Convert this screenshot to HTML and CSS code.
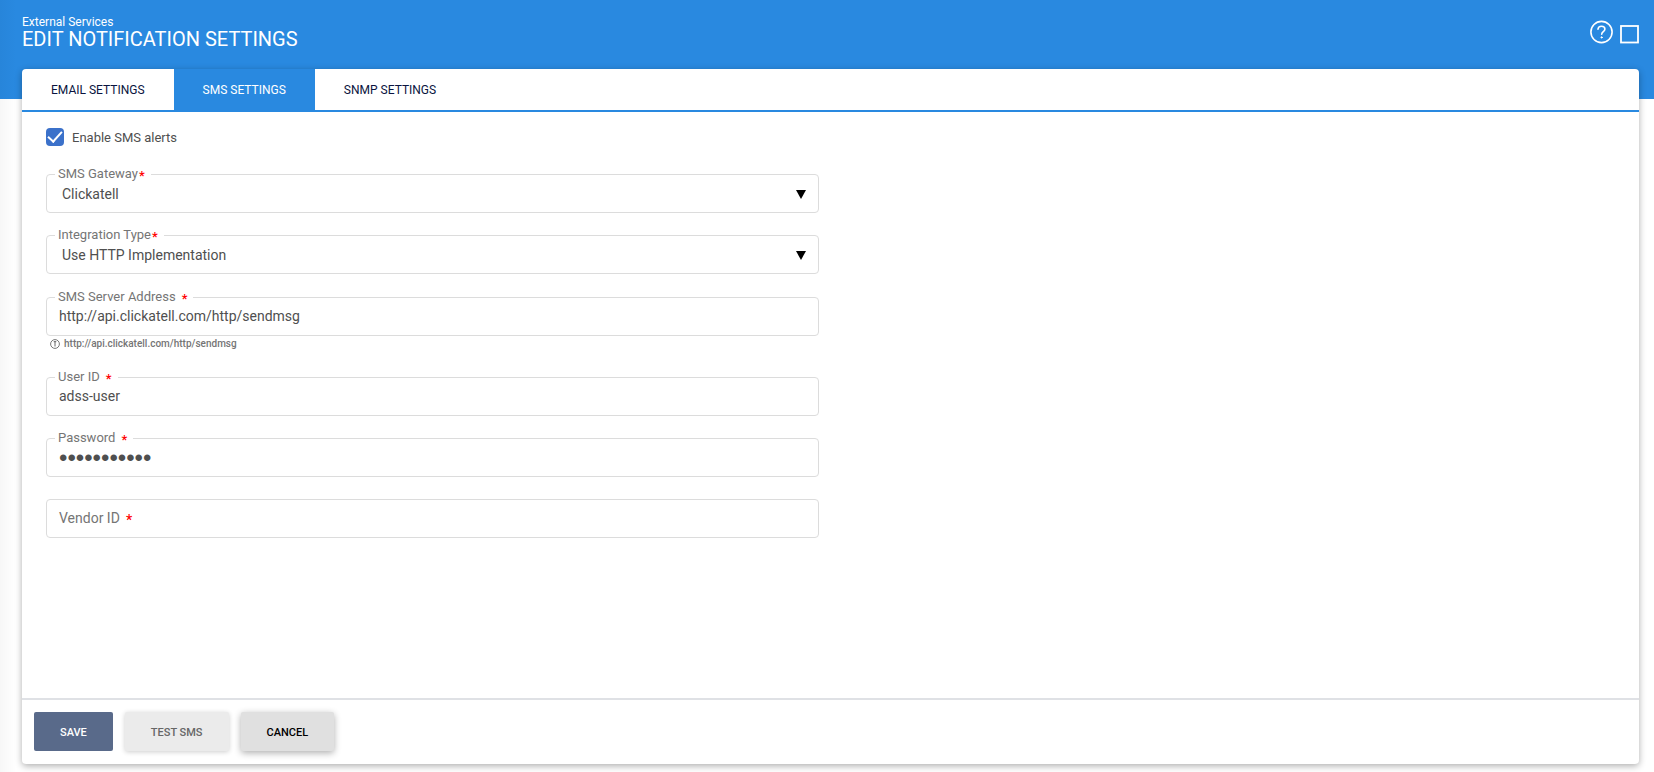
FILE: index.html
```html
<!DOCTYPE html>
<html lang="en">
<head>
<meta charset="utf-8">
<title>Edit Notification Settings</title>
<link rel="stylesheet" href="styles.css">
</head>
<body>
<header class="page-header">
  <div class="page-title">
    <div class="breadcrumb">External Services</div>
    <h1 class="title">EDIT NOTIFICATION SETTINGS</h1>
  </div>
  <div class="header-actions">
    <button class="icon-button" type="button" aria-label="Help">
      <svg width="24" height="24" viewBox="0 0 24 24" fill="none" stroke="#fff" stroke-width="1.6" stroke-linecap="round"><circle cx="11.5" cy="12" r="10.6"/><path d="M8 9.3C8.1 7.2 9.6 6.2 11.5 6.2s3.4 1.1 3.4 2.9c0 2.6-3.2 2.6-3.2 5.2"/><circle cx="11.6" cy="17.4" r=".7" fill="#fff" stroke-width=".8"/></svg>
    </button>
    <button class="icon-button box-button" type="button" aria-label="Expand">
      <svg width="19" height="19" viewBox="0 0 19 19" fill="none" stroke="#fff" stroke-width="1.8"><rect x="1" y="1" width="17" height="16.5"/></svg>
    </button>
  </div>
</header>
<main class="card">
  <nav class="tabs">
    <a class="tab" href="#email">EMAIL SETTINGS</a>
    <a class="tab tab-active" href="#sms" aria-current="page">SMS SETTINGS</a>
    <a class="tab" href="#snmp">SNMP SETTINGS</a>
  </nav>
  <form class="form">
    <div class="fields">
      <label class="check"><input class="check-box" type="checkbox" checked><span class="check-text">Enable SMS alerts</span></label>
      <div class="field">
        <label class="label" for="gateway">SMS Gateway<span class="star star-near">*</span></label>
        <select class="control select" id="gateway"><option>Clickatell</option></select>
        <svg class="arrow" width="10" height="9" viewBox="0 0 10 9"><path d="M0 0h10L5 9z"/></svg>
      </div>
      <div class="field">
        <label class="label" for="type">Integration Type<span class="star star-near">*</span></label>
        <select class="control select" id="type"><option>Use HTTP Implementation</option></select>
        <svg class="arrow" width="10" height="9" viewBox="0 0 10 9"><path d="M0 0h10L5 9z"/></svg>
      </div>
      <div class="field field-hinted">
        <label class="label" for="address">SMS Server Address<span class="star">*</span></label>
        <input class="control text" id="address" type="text" value="http://api.clickatell.com/http/sendmsg">
        <div class="hint">
          <svg width="10" height="10" viewBox="0 0 10 10" fill="none" stroke="#666"><circle cx="5" cy="5" r="4.4" stroke-width=".9"/><path d="M5 2.2v5.3M3.7 2.7h2.6" stroke-width="1"/></svg>
          <span>http://api.clickatell.com/http/sendmsg</span>
        </div>
      </div>
      <div class="field">
        <label class="label" for="user">User ID<span class="star">*</span></label>
        <input class="control text" id="user" type="text" value="adss-user">
      </div>
      <div class="field">
        <label class="label" for="password">Password<span class="star">*</span></label>
        <input class="control password" id="password" type="password" value="secretvalue">
      </div>
      <div class="field">
        <label class="label label-inside" for="vendor">Vendor ID<span class="star">*</span></label>
        <input class="control text" id="vendor" type="text">
      </div>
    </div>
    <footer class="actions">
      <button class="button button-save" type="button">SAVE</button>
      <button class="button button-test" type="button" disabled>TEST SMS</button>
      <button class="button button-cancel" type="button">CANCEL</button>
    </footer>
  </form>
</main>
</body>
</html>
```
FILE: styles.css
```css
* { box-sizing: border-box; }

body {
  margin: 0;
  min-height: 100vh;
  display: flex;
  flex-direction: column;
  background: linear-gradient(to right, #f7f7f7, #fff 16px);
  color: #4f4f4f;
  font-family: Roboto, "Liberation Sans", sans-serif;
  font-size: 14px;
}

.page-header {
  display: flex;
  justify-content: space-between;
  align-items: flex-start;
  height: 99px;
  padding: 14px 15px 0 22px;
  background: linear-gradient(to right, #2785da, #2989e0 16px);
  color: #fff;
}

.breadcrumb { font-size: 12px; line-height: 16px; }

.title {
  margin: 0;
  font-size: 20px;
  font-weight: 400;
  line-height: 19px;
}

.header-actions { display: flex; gap: 6px; padding-top: 6px; }

.icon-button {
  display: flex;
  padding: 0;
  border: 0;
  background: none;
}

.box-button { padding-top: 5px; }

.card {
  flex: 1;
  display: flex;
  flex-direction: column;
  margin: -30px 15px 8px 22px;
  border-radius: 4px;
  background: #fff;
  box-shadow: 0 2px 7px rgba(0, 0, 0, .32);
}

.tabs {
  display: flex;
  border-bottom: 2px solid #2989e0;
}

.tab {
  padding: 1px 29px 0;
  border-radius: 4px 0 0;
  color: #0a1440;
  font-size: 12px;
  line-height: 40px;
  text-decoration: none;
}

.tab-active {
  border-radius: 0;
  background: #2989e0;
  color: #fff;
}

.form {
  flex: 1;
  display: flex;
  flex-direction: column;
}

.fields {
  flex: 1;
  display: flex;
  flex-direction: column;
  gap: 22px;
  width: 50%;
  padding: 16px 12px 22px 24px;
}

.check {
  display: flex;
  align-items: center;
  gap: 8px;
  margin-bottom: 6px;
  font-size: 13px;
  line-height: 16px;
}

.check-text { padding-top: 2px; }

.check-box {
  appearance: none;
  width: 18px;
  height: 18px;
  margin: 0;
  border-radius: 4px;
  background: #3b71ca;
  display: grid;
  place-items: center;
}

.check-box:checked::after {
  content: "";
  width: 6px;
  height: 12px;
  margin-bottom: 5px;
  border: solid #fff;
  border-width: 0 2px 2px 0;
  transform: rotate(42deg);
}

.field { position: relative; }

.control {
  display: block;
  width: 100%;
  height: 39px;
  padding: 0 12px;
  border: 1px solid #dcdcdc;
  border-radius: 4px;
  background: #fff;
  color: #4f4f4f;
  font: inherit;
  outline: 0;
}

.select { appearance: none; padding-left: 15px; }
.text { padding-bottom: 2px; }
.password { font: 24px "Liberation Sans", Arial, sans-serif; }

.arrow {
  position: absolute;
  right: 13px;
  top: 16px;
  pointer-events: none;
}

.label {
  position: absolute;
  left: 9px;
  top: -8px;
  padding: 0 6px 0 3px;
  background: #fff;
  color: #757575;
  font-size: 13px;
  line-height: 16px;
}

.label-inside {
  left: 10px;
  top: 10px;
  font-size: 14px;
  line-height: 18px;
}

.star {
  margin-left: 6px;
  color: #f00;
  font-weight: 500;
  line-height: 1px;
  vertical-align: -2px;
}

.star-near { margin-left: 1px; }

.hint {
  display: flex;
  align-items: center;
  gap: 4px;
  padding: 1px 4px 0;
  color: #757575;
  font-size: 10px;
  font-weight: 500;
  line-height: 14px;
}

.field-hinted { margin-top: 1px; padding-bottom: 4px; }

.actions {
  display: flex;
  gap: 12px;
  padding: 12px 12px 13px;
  border-top: 2px solid #dfe1e5;
}

.button {
  height: 39px;
  padding: 2px 26px 0;
  border: 0;
  border-radius: 2px;
  font: 500 11px/16px Roboto, "Liberation Sans", sans-serif;
}

.button-save { background: #596a8a; color: #fff; }

.button-test {
  background: #ebebeb;
  color: #666;
  box-shadow: 0 1px 5px rgba(0, 0, 0, .2);
}

.button-cancel {
  background: #e0e0e0;
  color: #000;
  box-shadow: 0 2px 7px rgba(0, 0, 0, .32);
}
```
